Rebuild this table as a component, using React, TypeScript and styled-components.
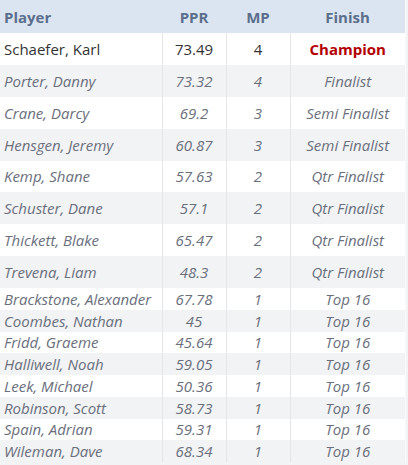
import styled, { createGlobalStyle } from 'styled-components'

const GlobalStyle = createGlobalStyle`
  html, body {
    margin: 0;
    padding: 0;
    background: #f2f3f5;
    font-family: "Open Sans", "Liberation Sans", sans-serif;
  }
`;

const Table = styled.table`
  width: 406px;
  border-collapse: collapse;
  border-right: 1px solid #fafafa;
  font-size: 15px;
`;

const HeadCell = styled.th<{ $align?: string }>`
  background: #dae5f1;
  color: #5b6e8b;
  font-weight: 700;
  text-align: ${p => p.$align || 'center'};
  height: 33px;
  padding: 0 4px;
  box-sizing: border-box;
`;

const Row = styled.tr<{ $odd: boolean; $tall: boolean }>`
  background: ${p => p.$odd ? '#f2f3f5' : '#ffffff'};
  height: ${p => p.$tall ? '31.875px' : '21.75px'};
`;

const Cell = styled.td<{ $align?: string; $top?: boolean }>`
  padding: 0 4px;
  text-align: ${p => p.$align || 'center'};
  color: ${p => p.$top ? '#333333' : '#6a6f7c'};
  font-style: ${p => p.$top ? 'normal' : 'italic'};
  border-left: 1px solid #e6e6e6;
  line-height: 20px;
  white-space: nowrap;

  &:first-child {
    border-left: none;
  }
`;

const Champion = styled.span`
  color: #b30000;
  font-weight: 700;
`;

const rows: [string, string, number, string][] = [
  ['Schaefer, Karl', '73.49', 4, 'Champion'],
  ['Porter, Danny', '73.32', 4, 'Finalist'],
  ['Crane, Darcy', '69.2', 3, 'Semi Finalist'],
  ['Hensgen, Jeremy', '60.87', 3, 'Semi Finalist'],
  ['Kemp, Shane', '57.63', 2, 'Qtr Finalist'],
  ['Schuster, Dane', '57.1', 2, 'Qtr Finalist'],
  ['Thickett, Blake', '65.47', 2, 'Qtr Finalist'],
  ['Trevena, Liam', '48.3', 2, 'Qtr Finalist'],
  ['Brackstone, Alexander', '67.78', 1, 'Top 16'],
  ['Coombes, Nathan', '45', 1, 'Top 16'],
  ['Fridd, Graeme', '45.64', 1, 'Top 16'],
  ['Halliwell, Noah', '59.05', 1, 'Top 16'],
  ['Leek, Michael', '50.36', 1, 'Top 16'],
  ['Robinson, Scott', '58.73', 1, 'Top 16'],
  ['Spain, Adrian', '59.31', 1, 'Top 16'],
  ['Wileman, Dave', '68.34', 1, 'Top 16'],
]

export default function App() {
  return (
    <>
      <GlobalStyle />
      <Table>
        <colgroup>
          <col style={{ width: 162 }} />
          <col style={{ width: 64 }} />
          <col style={{ width: 64 }} />
          <col />
        </colgroup>
        <thead>
          <tr>
            <HeadCell $align="left">Player</HeadCell>
            <HeadCell>PPR</HeadCell>
            <HeadCell>MP</HeadCell>
            <HeadCell>Finish</HeadCell>
          </tr>
        </thead>
        <tbody>
          {rows.map(([name, ppr, mp, finish], i) => {
            const top = i === 0
            return (
              <Row key={name} $odd={i % 2 === 1} $tall={i < 8}>
                <Cell $align="left" $top={top}>{name}</Cell>
                <Cell $top={top}>{ppr}</Cell>
                <Cell $top={top}>{mp}</Cell>
                <Cell $top={top}>{top ? <Champion>{finish}</Champion> : finish}</Cell>
              </Row>
            )
          })}
        </tbody>
      </Table>
    </>
  )
}
